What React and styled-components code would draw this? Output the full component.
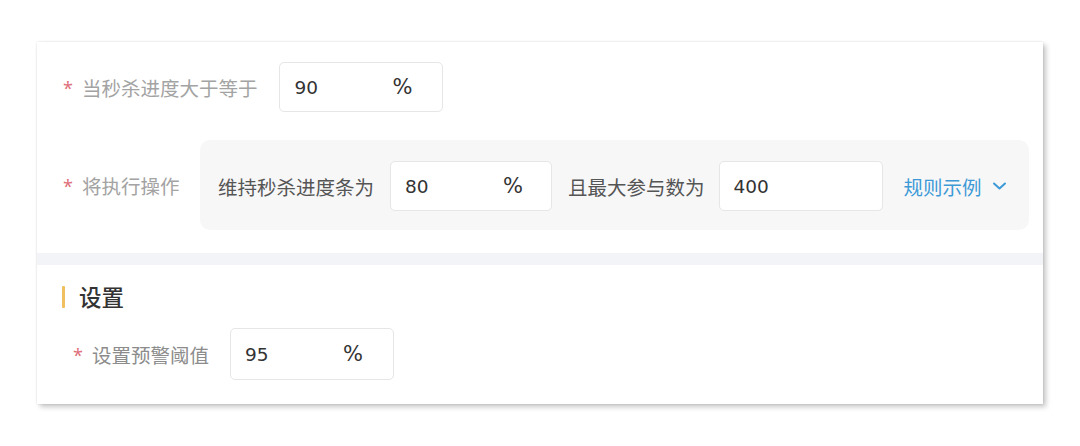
import React from 'react';
import styled, { createGlobalStyle } from 'styled-components';

const GlobalStyle = createGlobalStyle`
  html, body { margin: 0; padding: 0; background: #fff; }
  body {
    font-family: "Noto Sans", "Noto Sans CJK SC", sans-serif;
    -webkit-font-smoothing: antialiased;
  }
`;

const Page = styled.div`
  width: 1080px;
  height: 446px;
  padding: 42px 0 0 37px;
  box-sizing: border-box;
`;

const Card = styled.div`
  width: 1006px;
  background: #fff;
  box-shadow: 3px 3px 5px rgba(0, 0, 0, 0.22), 0 0 2px rgba(0, 0, 0, 0.12);
`;

const TopSection = styled.div`
  padding: 20px 14px 23px 26px;
  display: flex;
  flex-direction: column;
  gap: 28px;
`;

const Row = styled.div`
  display: flex;
  align-items: center;
  padding-left: ${p => p.$indent || 0}px;
`;

const Label = styled.div`
  display: flex;
  align-items: center;
  flex-shrink: 0;
  width: ${p => (p.$width ? `${p.$width}px` : 'auto')};
  margin-right: ${p => p.$gap || 0}px;
  font-size: 19.5px;
  color: ${p => p.$color || '#a3a3a3'};
  white-space: nowrap;
  &::before {
    content: '*';
    color: #e0707a;
    font-size: 18px;
    margin-right: 9px;
    position: relative;
    top: 1px;
  }
`;

const ActionBox = styled.div`
  flex: 1;
  height: 90px;
  background: #f7f7f8;
  border-radius: 10px;
  display: flex;
  align-items: center;
  padding: 2px 0 0 18px;
  box-sizing: border-box;
`;

const BoxText = styled.span`
  font-size: 19.5px;
  color: #555;
  white-space: nowrap;
  margin: 0 ${p => p.$after || 0}px 0 ${p => p.$before || 0}px;
`;

const Field = styled.div`
  width: ${p => p.$width || 164}px;
  height: ${p => p.$height || 50}px;
  box-sizing: border-box;
  border: 1px solid #e6e6e6;
  border-radius: 5px;
  background: #fff;
  display: flex;
  align-items: center;
  padding-left: 14px;
  font-family: "DejaVu Sans", "Noto Sans", sans-serif;
  font-size: 18.5px;
  color: #333;
  flex-shrink: 0;
`;

const Value = styled.span`
  width: 98px;
`;

const Unit = styled.span`
  font-size: 21px;
  line-height: 1;
`;

const Link = styled.a`
  display: flex;
  align-items: center;
  gap: 10px;
  margin-left: 21px;
  font-size: 19.5px;
  color: #3d9ad6;
  text-decoration: none;
`;

const Divider = styled.div`
  height: 12px;
  background: #f2f4f7;
`;

const BottomSection = styled.div`
  padding: 20px 0 24px 25px;
  display: flex;
  flex-direction: column;
  gap: 20px;
`;

const Title = styled.div`
  display: flex;
  align-items: center;
  gap: 14px;
  font-size: 22.5px;
  font-weight: 500;
  color: #333;
  height: 23px;
  &::before {
    content: '';
    width: 3px;
    height: 22px;
    border-radius: 1px;
    background: #f0c060;
  }
`;

const PercentInput = ({ value, width, height, unit = true }) => (
  <Field $width={width} $height={height}>
    <Value>{value}</Value>
    {unit && <Unit>%</Unit>}
  </Field>
);

const Chevron = () => (
  <svg width="15" height="10" viewBox="0 0 15 10" fill="none">
    <path d="M2 2.5l5.5 5 5.5-5" stroke="#3d9ad6" strokeWidth="2" strokeLinecap="round" strokeLinejoin="round" />
  </svg>
);

export default function App() {
  return (
    <>
      <GlobalStyle />
      <Page>
        <Card>
          <TopSection>
            <Row>
              <Label $gap={22}>当秒杀进度大于等于</Label>
              <PercentInput value="90" />
            </Row>
            <Row>
              <Label $width={137}>将执行操作</Label>
              <ActionBox>
                <BoxText $after={16}>维持秒杀进度条为</BoxText>
                <PercentInput value="80" width={162} />
                <BoxText $before={16} $after={14}>且最大参与数为</BoxText>
                <PercentInput value="400" unit={false} />
                <Link>
                  规则示例
                  <Chevron />
                </Link>
              </ActionBox>
            </Row>
          </TopSection>
          <Divider />
          <BottomSection>
            <Title>设置</Title>
            <Row $indent={11}>
              <Label $gap={21} $color="#8c8c8c">设置预警阈值</Label>
              <PercentInput value="95" height={52} />
            </Row>
          </BottomSection>
        </Card>
      </Page>
    </>
  );
}
